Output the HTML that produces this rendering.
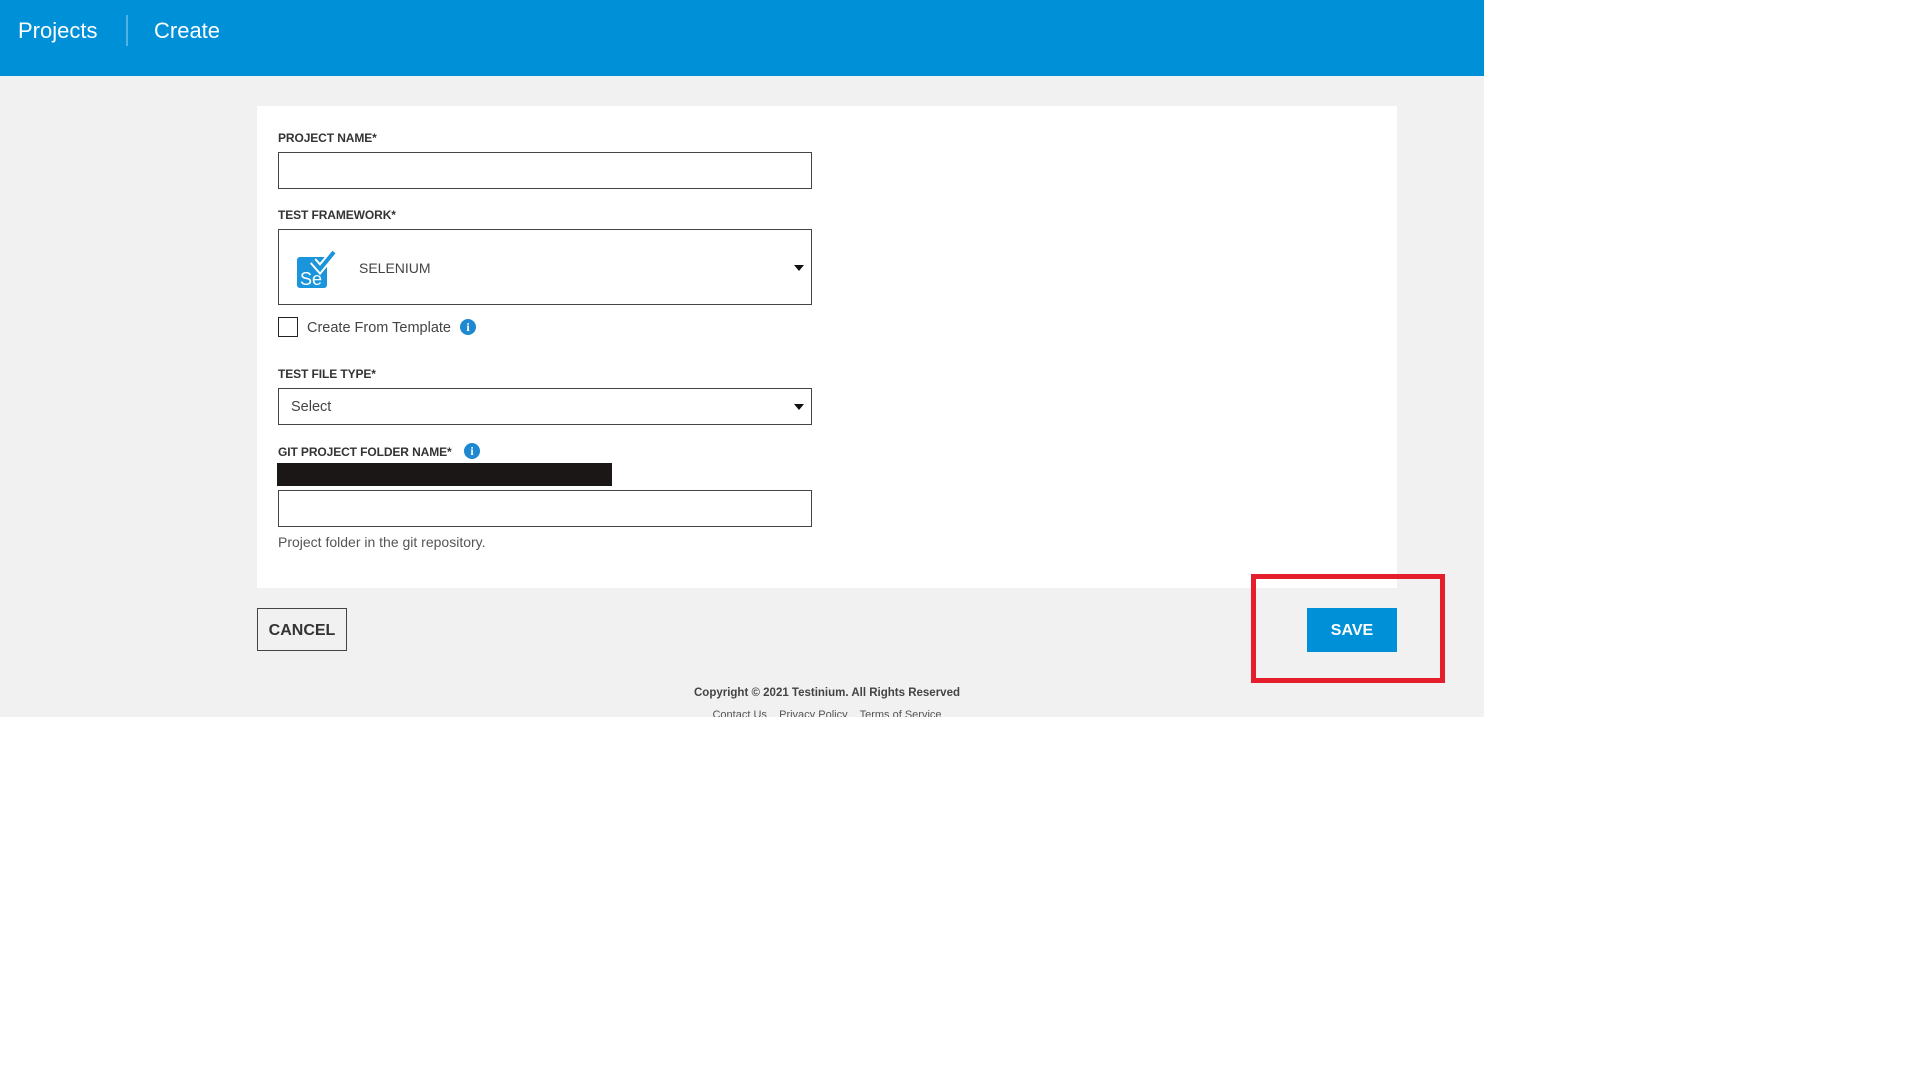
<!DOCTYPE html>
<html><head><meta charset="utf-8"><style>
*{margin:0;padding:0;box-sizing:border-box}
body{width:1920px;height:1080px;background:#fff;position:relative;overflow:hidden;font-family:"Liberation Sans",sans-serif}
.abs{position:absolute}
.hdr{left:0;top:0;width:1484px;height:76px;background:#0090d8}
.gray{left:0;top:76px;width:1484px;height:641px;background:#f1f1f1}
.card{left:257px;top:106px;width:1140px;height:482px;background:#fff}
.lbl{font-size:12px;font-weight:bold;color:#333;letter-spacing:-0.1px}
.box{border:1.5px solid #444;background:#fff;left:278px;width:534px}
.arrow{width:0;height:0;border-left:5px solid transparent;border-right:5px solid transparent;border-top:6px solid #111}
.info{width:16px;height:16px;border-radius:50%;background:#1e88d0;color:#fff;font-size:12px;font-weight:bold;text-align:center;line-height:16px;font-family:"Liberation Serif",serif}
.txt{font-size:14.5px;color:#444}
</style></head><body>
<div class="abs hdr"></div>
<div class="abs" style="left:18px;top:18px;font-size:22px;color:#fff">Projects</div>
<div class="abs" style="left:126px;top:15px;width:2px;height:31px;background:#4fb3e6"></div>
<div class="abs" style="left:154px;top:18px;font-size:22px;color:#fff">Create</div>
<div class="abs gray"></div>
<div class="abs card"></div>

<div class="abs lbl" style="left:278px;top:131px">PROJECT NAME*</div>
<div class="abs box" style="top:152px;height:37px"></div>

<div class="abs lbl" style="left:278px;top:208px">TEST FRAMEWORK*</div>
<div class="abs box" style="top:229px;height:76px"></div>
<div class="abs" style="left:297px;top:257px;width:30px;height:31px;background:#1a95dc;border-radius:3px"></div>
<svg class="abs" style="left:297px;top:248px" width="44" height="42"><path d="M16 13 L23 21 L37 4" stroke="#fff" stroke-width="8" fill="none"/><path d="M16 13 L23 21 L37 4" stroke="#1a95dc" stroke-width="4" fill="none"/><text x="3" y="37" font-family="Liberation Sans" font-size="18" fill="#fff">Se</text></svg>
<div class="abs txt" style="left:359px;top:260px;font-size:14px">SELENIUM</div>
<div class="abs arrow" style="left:794px;top:265px"></div>

<div class="abs" style="left:278px;top:317px;width:20px;height:20px;border:1.5px solid #222;background:#fff"></div>
<div class="abs txt" style="left:307px;top:320px">Create From Template</div>
<div class="abs info" style="left:460px;top:319px">i</div>

<div class="abs lbl" style="left:278px;top:367px">TEST FILE TYPE*</div>
<div class="abs box" style="top:388px;height:37px"></div>
<div class="abs txt" style="left:291px;top:399px">Select</div>
<div class="abs arrow" style="left:794px;top:404px"></div>

<div class="abs lbl" style="left:278px;top:445px">GIT PROJECT FOLDER NAME*</div>
<div class="abs info" style="left:464px;top:443px">i</div>
<div class="abs" style="left:277px;top:463px;width:335px;height:23px;background:#1a1716"></div>
<div class="abs box" style="top:490px;height:37px"></div>
<div class="abs txt" style="left:278px;top:534px;font-size:14px;color:#555">Project folder in the git repository.</div>

<div class="abs" style="left:257px;top:608px;width:90px;height:43px;border:1.5px solid #444;font-size:16px;font-weight:bold;color:#333;text-align:center;line-height:43px">CANCEL</div>
<div class="abs" style="left:1307px;top:608px;width:90px;height:44px;background:#0090d8;font-size:16px;font-weight:bold;color:#fff;text-align:center;line-height:46px">SAVE</div>
<div class="abs" style="left:1251px;top:574px;width:194px;height:109px;border:5px solid #e41e2a"></div>

<div class="abs" style="left:627px;top:687px;width:400px;text-align:center;font-size:11.5px;font-weight:bold;color:#444">Copyright © 2021 Testinium. All Rights Reserved</div>
<div class="abs" style="left:627px;top:709px;width:400px;height:8px;overflow:hidden;text-align:center;font-size:11px;color:#555">Contact Us &nbsp;&nbsp; Privacy Policy &nbsp;&nbsp; Terms of Service</div>
</body></html>
